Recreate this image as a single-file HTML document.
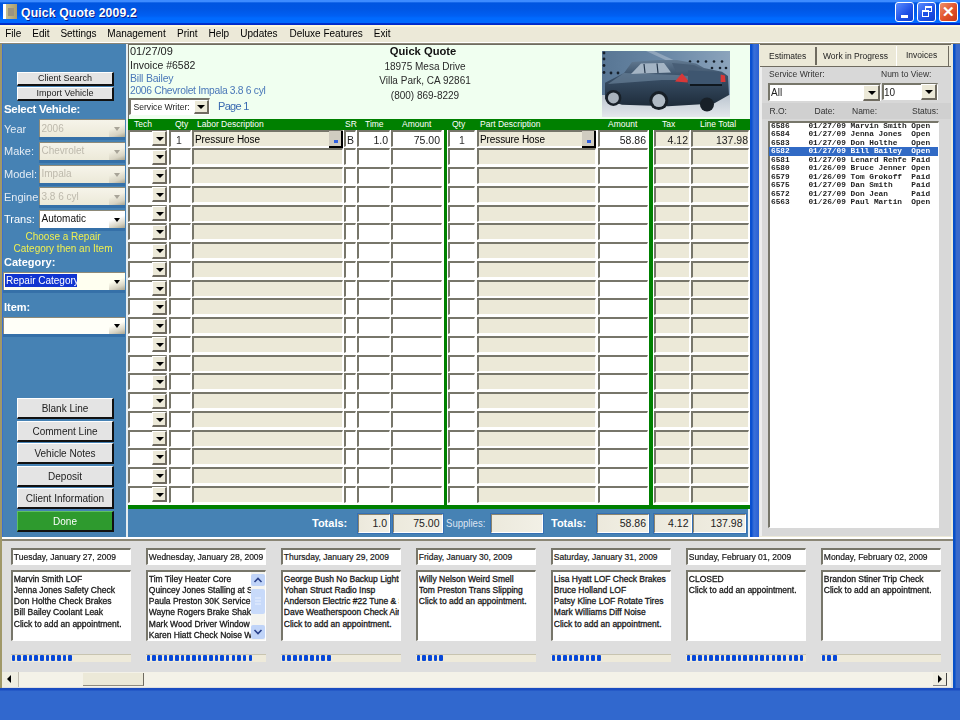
<!DOCTYPE html><html><head><meta charset="utf-8"><style>
*{box-sizing:border-box}
html,body{margin:0;padding:0;width:960px;height:720px;overflow:hidden;background:#ECE9D8;font-family:"Liberation Sans",sans-serif;}
.ab{position:absolute}
.t{position:absolute;white-space:nowrap;line-height:1}
.btn{position:absolute;background:#E4E4E4;border-top:1px solid #fff;border-left:1px solid #fff;border-right:2px solid #111;border-bottom:2px solid #111;font-size:10px;color:#222;text-align:center;line-height:15px;white-space:nowrap}
.sunk{position:absolute;border-top:2px solid #77766A;border-left:2px solid #77766A;border-right:1px solid #fff;border-bottom:1px solid #fff}
.ddb{position:absolute;background:#ECE9D8;border-right:2px solid #6f6b60;border-bottom:2px solid #6f6b60;border-top:1px solid #fff;border-left:1px solid #fff}
.arr{position:absolute;width:0;height:0;border-left:4px solid transparent;border-right:4px solid transparent;border-top:4px solid #000}

</style></head><body><div style="position:absolute;left:0;top:0;width:960px;height:720px;overflow:hidden;filter:blur(0.35px)">
<div class="ab" style="left:0;top:0;width:960px;height:25px;background:linear-gradient(to bottom,#3D8BFF 0px,#3D8BFF 1.5px,#0055E0 3px,#0056E4 9px,#0060F4 16px,#006AFF 18px,#006AFF 22.5px,#0030CC 23.5px,#0028C8 25px)"></div>
<div class="ab" style="left:3px;top:4px;width:14px;height:15px;background:linear-gradient(90deg,#fff 0,#fff 3px,#C8C090 3px,#A89C70 100%)"></div>
<div class="ab" style="left:8px;top:8px;width:6px;height:8px;background:#9C9480"></div>
<div class="t" style="left:21px;top:7px;font-size:12.2px;font-weight:bold;color:#fff;letter-spacing:0.15px;text-shadow:1px 1px 0 #0A1E8C">Quick Quote 2009.2</div>
<div class="ab" style="left:895px;top:2px;width:19px;height:20px;border:1px solid #fff;border-radius:3px;background:linear-gradient(135deg,#5A8CFF,#1E50E6 60%,#1040D0)"><div class="ab" style="left:5px;top:12px;width:7px;height:3px;background:#fff"></div></div>
<div class="ab" style="left:917px;top:2px;width:19px;height:20px;border:1px solid #fff;border-radius:3px;background:linear-gradient(135deg,#5A8CFF,#1E50E6 60%,#1040D0)"><div class="ab" style="left:7px;top:3px;width:7px;height:6px;border:1px solid #fff;border-top-width:2px"></div><div class="ab" style="left:4px;top:7px;width:7px;height:7px;border:1px solid #fff;border-top-width:2px;background:#1E50E6"></div></div>
<div class="ab" style="left:939px;top:2px;width:19px;height:20px;border:1px solid #fff;border-radius:3px;background:linear-gradient(135deg,#F0906A,#E0502A 55%,#C83A18)"><div class="ab" style="left:2px;top:1px;font-size:15px;font-weight:bold;color:#fff;line-height:16px">&#x2715;</div></div>
<div class="ab" style="left:0;top:25px;width:960px;height:2px;background:#FCF8DC"></div>
<div class="t" style="left:5.2px;top:29px;font-size:10px;color:#000">File</div>
<div class="t" style="left:32.3px;top:29px;font-size:10px;color:#000">Edit</div>
<div class="t" style="left:60.4px;top:29px;font-size:10px;color:#000">Settings</div>
<div class="t" style="left:107.3px;top:29px;font-size:10px;color:#000">Management</div>
<div class="t" style="left:177px;top:29px;font-size:10px;color:#000">Print</div>
<div class="t" style="left:208.6px;top:29px;font-size:10px;color:#000">Help</div>
<div class="t" style="left:240.3px;top:29px;font-size:10px;color:#000">Updates</div>
<div class="t" style="left:289.5px;top:29px;font-size:10px;color:#000">Deluxe Features</div>
<div class="t" style="left:373.8px;top:29px;font-size:10px;color:#000">Exit</div>
<div class="ab" style="left:0;top:42px;width:960px;height:1px;background:#fff"></div>
<div class="ab" style="left:0;top:43px;width:960px;height:1px;background:#8A8676"></div>
<div class="ab" style="left:0;top:44px;width:2px;height:644px;background:#A09868"></div>
<div class="ab" style="left:2px;top:44px;width:124px;height:493px;background:#4682B4;border-left:1px solid #3A70D0"></div>
<div class="btn" style="left:17px;top:72px;width:97px;height:14px;font-size:9px;line-height:11px">Client Search</div>
<div class="btn" style="left:17px;top:87px;width:97px;height:14px;font-size:9px;line-height:11px">Import Vehicle</div>
<div class="t" style="left:4px;top:104px;font-size:11.5px;font-weight:bold;color:#fff;letter-spacing:-0.3px">Select Vehicle:</div>
<div class="t" style="left:4px;top:123.8px;font-size:11px;color:#E4ECF4">Year</div>
<div class="ab" style="left:39px;top:137.3px;width:86px;height:3px;background:#3570A8"></div>
<div class="ab" style="left:39px;top:119.3px;width:86px;height:18px;background:linear-gradient(#F6F4EA,#ECE9D8);border-top:1.5px solid #8E8A78;border-left:1.5px solid #8E8A78"></div>
<div class="t" style="left:41.5px;top:123.8px;font-size:10px;color:#BDB9AC">2006</div>
<div class="ab" style="left:109px;top:121.3px;width:16px;height:16px;background:linear-gradient(160deg,rgba(236,233,216,0) 40%,#D8D4C4 75%,#A8A490 100%)"></div>
<div class="arr" style="left:113.5px;top:127.3px;border-left-width:3.5px;border-right-width:3.5px;border-top-width:4px;border-top-color:#A8A498"></div>
<div class="t" style="left:4px;top:146.4px;font-size:11px;color:#E4ECF4">Make:</div>
<div class="ab" style="left:39px;top:159.9px;width:86px;height:3px;background:#3570A8"></div>
<div class="ab" style="left:39px;top:141.9px;width:86px;height:18px;background:linear-gradient(#F6F4EA,#ECE9D8);border-top:1.5px solid #8E8A78;border-left:1.5px solid #8E8A78"></div>
<div class="t" style="left:41.5px;top:146.4px;font-size:10px;color:#BDB9AC">Chevrolet</div>
<div class="ab" style="left:109px;top:143.9px;width:16px;height:16px;background:linear-gradient(160deg,rgba(236,233,216,0) 40%,#D8D4C4 75%,#A8A490 100%)"></div>
<div class="arr" style="left:113.5px;top:149.9px;border-left-width:3.5px;border-right-width:3.5px;border-top-width:4px;border-top-color:#A8A498"></div>
<div class="t" style="left:4px;top:169.0px;font-size:11px;color:#E4ECF4">Model:</div>
<div class="ab" style="left:39px;top:182.5px;width:86px;height:3px;background:#3570A8"></div>
<div class="ab" style="left:39px;top:164.5px;width:86px;height:18px;background:linear-gradient(#F6F4EA,#ECE9D8);border-top:1.5px solid #8E8A78;border-left:1.5px solid #8E8A78"></div>
<div class="t" style="left:41.5px;top:169.0px;font-size:10px;color:#BDB9AC">Impala</div>
<div class="ab" style="left:109px;top:166.5px;width:16px;height:16px;background:linear-gradient(160deg,rgba(236,233,216,0) 40%,#D8D4C4 75%,#A8A490 100%)"></div>
<div class="arr" style="left:113.5px;top:172.5px;border-left-width:3.5px;border-right-width:3.5px;border-top-width:4px;border-top-color:#A8A498"></div>
<div class="t" style="left:4px;top:191.6px;font-size:11px;color:#E4ECF4">Engine</div>
<div class="ab" style="left:39px;top:205.1px;width:86px;height:3px;background:#3570A8"></div>
<div class="ab" style="left:39px;top:187.1px;width:86px;height:18px;background:linear-gradient(#F6F4EA,#ECE9D8);border-top:1.5px solid #8E8A78;border-left:1.5px solid #8E8A78"></div>
<div class="t" style="left:41.5px;top:191.6px;font-size:10px;color:#BDB9AC">3.8 6 cyl</div>
<div class="ab" style="left:109px;top:189.1px;width:16px;height:16px;background:linear-gradient(160deg,rgba(236,233,216,0) 40%,#D8D4C4 75%,#A8A490 100%)"></div>
<div class="arr" style="left:113.5px;top:195.1px;border-left-width:3.5px;border-right-width:3.5px;border-top-width:4px;border-top-color:#A8A498"></div>
<div class="t" style="left:4px;top:214.2px;font-size:11px;color:#fff">Trans:</div>
<div class="ab" style="left:39px;top:227.7px;width:86px;height:3px;background:#3570A8"></div>
<div class="ab" style="left:39px;top:209.7px;width:86px;height:18px;background:#fff;border-top:1.5px solid #8E8A78;border-left:1.5px solid #8E8A78"></div>
<div class="t" style="left:41.5px;top:214.2px;font-size:10px;color:#111">Automatic</div>
<div class="ab" style="left:109px;top:211.7px;width:16px;height:16px;background:linear-gradient(160deg,rgba(236,233,216,0) 40%,#D8D4C4 75%,#A8A490 100%)"></div>
<div class="arr" style="left:113.5px;top:217.7px;border-left-width:3.5px;border-right-width:3.5px;border-top-width:4px;border-top-color:#000"></div>
<div class="t" style="left:0;top:231px;width:126px;text-align:center;font-size:10px;color:#F0F050;line-height:12px;white-space:normal">Choose a Repair<br>Category then an Item</div>
<div class="t" style="left:4px;top:257px;font-size:11px;font-weight:bold;color:#fff">Category:</div>
<div class="ab" style="left:3px;top:290px;width:122px;height:3px;background:#3570A8"></div>
<div class="ab" style="left:3px;top:272px;width:122px;height:18px;background:#FFFFF0;border-top:1.5px solid #8E8A78;border-left:1.5px solid #8E8A78"></div>
<div class="ab" style="left:5px;top:274px;width:72px;height:13px;background:#1034D0"></div>
<div class="t" style="left:6px;top:276px;font-size:10px;color:#fff">Repair Category</div>
<div class="ab" style="left:109px;top:274px;width:16px;height:16px;background:linear-gradient(160deg,rgba(236,233,216,0) 40%,#D8D4C4 75%,#A8A490 100%)"></div><div class="arr" style="left:113.5px;top:280px;border-left-width:3.5px;border-right-width:3.5px"></div>
<div class="t" style="left:4px;top:302px;font-size:11px;font-weight:bold;color:#fff">Item:</div>
<div class="ab" style="left:3px;top:334px;width:122px;height:3px;background:#3570A8"></div>
<div class="ab" style="left:3px;top:316.5px;width:122px;height:17.5px;background:#FFFFF8;border-top:1.5px solid #8E8A78;border-left:1.5px solid #8E8A78"></div>
<div class="ab" style="left:109px;top:318px;width:16px;height:16px;background:linear-gradient(160deg,rgba(236,233,216,0) 40%,#D8D4C4 75%,#A8A490 100%)"></div><div class="arr" style="left:113.5px;top:324px;border-left-width:3.5px;border-right-width:3.5px"></div>
<div class="btn" style="left:17px;top:398.0px;width:97px;height:21px;line-height:20px">Blank Line</div>
<div class="btn" style="left:17px;top:420.5px;width:97px;height:21px;line-height:20px">Comment Line</div>
<div class="btn" style="left:17px;top:443.0px;width:97px;height:21px;line-height:20px">Vehicle Notes</div>
<div class="btn" style="left:17px;top:465.5px;width:97px;height:21px;line-height:20px">Deposit</div>
<div class="btn" style="left:17px;top:488.0px;width:97px;height:21px;line-height:20px">Client Information</div>
<div class="btn" style="left:17px;top:510.5px;width:97px;height:21px;line-height:19px;background:#2E9A2E;color:#fff;border-top-color:#60C060;border-left-color:#60C060">Done</div>
<div class="ab" style="left:126px;top:44px;width:2px;height:493px;background:#E4ECF0"></div>
<div class="ab" style="left:128px;top:44px;width:622px;height:75px;background:#F0FFF0;border-top:1px solid #6f6b60;border-left:1px solid #6f6b60"></div>
<div class="t" style="left:130px;top:46px;font-size:11px;letter-spacing:0px;color:#222">01/27/09</div>
<div class="t" style="left:130px;top:59.5px;font-size:10.5px;letter-spacing:0px;color:#222">Invoice #6582</div>
<div class="t" style="left:130px;top:72.5px;font-size:10.5px;letter-spacing:-0.2px;color:#4A78B8">Bill Bailey</div>
<div class="t" style="left:130px;top:86px;font-size:10.3px;letter-spacing:-0.3px;color:#4A78B8">2006 Chevrolet Impala 3.8 6 cyl</div>
<div class="sunk" style="left:129px;top:98px;width:81px;height:17px;background:#fff"></div>
<div class="t" style="left:133.5px;top:103px;font-size:8.6px;color:#222">Service Writer:</div>
<div class="ddb" style="left:194px;top:100px;width:15px;height:14px"></div><div class="arr" style="left:197px;top:105px"></div>
<div class="t" style="left:218px;top:101px;font-size:11px;letter-spacing:-0.7px;color:#3A6AB0">Page 1</div>
<div class="t" style="left:323px;width:200px;text-align:center;top:46px;font-size:11.2px;color:#111;font-weight:bold">Quick Quote</div>
<div class="t" style="left:325px;width:200px;text-align:center;top:62.2px;font-size:10px;color:#2a2a2a;">18975 Mesa Drive</div>
<div class="t" style="left:325px;width:200px;text-align:center;top:76.2px;font-size:10px;color:#2a2a2a;">Villa Park, CA 92861</div>
<div class="t" style="left:325px;width:200px;text-align:center;top:91.2px;font-size:10px;color:#2a2a2a;">(800) 869-8229</div>
<svg class="ab" style="left:602.4px;top:50.6px" width="128" height="66" viewBox="0 0 128 66">
<defs>
<linearGradient id="bg" x1="0" y1="0" x2="1" y2="0"><stop offset="0" stop-color="#587694"/><stop offset="0.5" stop-color="#6A88A6"/><stop offset="1" stop-color="#8CA4BC"/></linearGradient>
<linearGradient id="gr" x1="0" y1="0" x2="0" y2="1"><stop offset="0" stop-color="#BCC6D0"/><stop offset="1" stop-color="#E4E8EC"/></linearGradient>
<linearGradient id="bd" x1="0" y1="0" x2="0" y2="1"><stop offset="0" stop-color="#627A92"/><stop offset="0.35" stop-color="#3A5068"/><stop offset="1" stop-color="#1E2C3A"/></linearGradient>
</defs>
<rect width="128" height="66" fill="url(#bg)"/>
<path d="M44 0 L52 0 L78 12 L70 12 Z" fill="#B0C0D0" opacity="0.55"/>
<rect x="0" y="44" width="128" height="22" fill="url(#gr)"/>
<g fill="#16202C"><circle cx="2" cy="2" r="1.4"/><circle cx="2" cy="8" r="1.4"/><circle cx="2" cy="14.5" r="1.4"/><circle cx="2" cy="21.5" r="1.4"/><circle cx="9" cy="22" r="1.4"/><circle cx="16" cy="22" r="1.4"/><circle cx="88" cy="10.5" r="1.3"/><circle cx="96" cy="10.5" r="1.3"/><circle cx="104" cy="10.5" r="1.3"/><circle cx="112" cy="10.5" r="1.3"/><circle cx="120" cy="10.5" r="1.3"/><circle cx="110" cy="17" r="1.3"/><circle cx="118" cy="17" r="1.3"/><circle cx="124" cy="17" r="1.3"/></g>
<path d="M30 11 L56 9 L75 9 L94 12.5 L102 17 L120 20.8 L126 25 L127 44 L112 52.4 L66 55.2 L20 53.8 L3 48.3 L3 31.8 L22 22 Z" fill="url(#bd)"/>
<path d="M22 22 L75 24 L100 26 L100 29 L60 29 L6 33 Z" fill="#7088A0" opacity="0.6"/>
<path d="M29 23 L39 12.5 L62 12 L69 21.5 Z" fill="#A4B4C4"/>
<path d="M42 13 L43 22 M55 12.5 L56 22" stroke="#24364A" stroke-width="1.2"/>
<path d="M70 12 L92 14 L100 18 L74 21 Z" fill="#485E76"/>
<path d="M86 19.4 L120 21 L120 33 L86 33 Z" fill="#3E5670"/>
<path d="M73 30.4 L80 22.2 L85.7 29 L85.7 31.5 Z" fill="#D83838"/>
<path d="M118.7 23.5 L123 24.5 L123.5 31 L118.7 31 Z" fill="#D83838"/>
<rect x="88" y="33" width="32" height="2" fill="#10181F"/>
<circle cx="11.4" cy="46.9" r="8" fill="#182028"/><circle cx="11.4" cy="46.9" r="5.5" fill="#A8B2BC"/>
<circle cx="56.8" cy="49.6" r="9.5" fill="#182028"/><circle cx="56.8" cy="49.6" r="6.5" fill="#B0BAC4"/>
<circle cx="105" cy="53.5" r="7" fill="#182028"/>
</svg>
<div class="ab" style="left:128px;top:119px;width:622px;height:390px;background:#fff"></div>
<div class="ab" style="left:128px;top:118.5px;width:622px;height:11.5px;background:#008000"></div>
<div class="t" style="left:134px;top:120px;font-size:8.5px;color:#fff">Tech</div>
<div class="t" style="left:175px;top:120px;font-size:8.5px;color:#fff">Qty</div>
<div class="t" style="left:197px;top:120px;font-size:8.5px;color:#fff">Labor Description</div>
<div class="t" style="left:345px;top:120px;font-size:8.5px;color:#fff">SR</div>
<div class="t" style="left:365px;top:120px;font-size:8.5px;color:#fff">Time</div>
<div class="t" style="left:402px;top:120px;font-size:8.5px;color:#fff">Amount</div>
<div class="t" style="left:452px;top:120px;font-size:8.5px;color:#fff">Qty</div>
<div class="t" style="left:480px;top:120px;font-size:8.5px;color:#fff">Part Description</div>
<div class="t" style="left:608px;top:120px;font-size:8.5px;color:#fff">Amount</div>
<div class="t" style="left:662px;top:120px;font-size:8.5px;color:#fff">Tax</div>
<div class="t" style="left:700px;top:120px;font-size:8.5px;color:#fff">Line Total</div>
<div class="ab" style="left:443.5px;top:119px;width:3.5px;height:390px;background:#008000"></div>
<div class="ab" style="left:649px;top:119px;width:3.5px;height:390px;background:#008000"></div>
<div class="ab" style="left:128px;top:505px;width:622px;height:3.5px;background:#008000"></div>
<div class="sunk" style="left:128px;top:129.60px;width:39px;height:17px;background:#fff"></div>
<div class="ddb" style="left:152px;top:131.10px;width:15px;height:15px"></div><div class="arr" style="left:155.5px;top:136.60px"></div>
<div class="sunk" style="left:169px;top:129.60px;width:22px;height:17px;background:#fff"></div>
<div class="sunk" style="left:192px;top:129.60px;width:151px;height:17px;background:#ECE9D8"></div>
<div class="sunk" style="left:344px;top:129.60px;width:12px;height:17px;background:#fff"></div>
<div class="sunk" style="left:357px;top:129.60px;width:33px;height:17px;background:#fff"></div>
<div class="sunk" style="left:391px;top:129.60px;width:51px;height:17px;background:#fff"></div>
<div class="sunk" style="left:447.5px;top:129.60px;width:27.5px;height:17px;background:#fff"></div>
<div class="sunk" style="left:476.5px;top:129.60px;width:119.5px;height:17px;background:#ECE9D8"></div>
<div class="sunk" style="left:597.5px;top:129.60px;width:50.5px;height:17px;background:#fff"></div>
<div class="sunk" style="left:653.5px;top:129.60px;width:36.5px;height:17px;background:#ECE9D8"></div>
<div class="sunk" style="left:691px;top:129.60px;width:58px;height:17px;background:#ECE9D8"></div>
<div class="sunk" style="left:128px;top:148.35px;width:39px;height:17px;background:#fff"></div>
<div class="ddb" style="left:152px;top:149.85px;width:15px;height:15px"></div><div class="arr" style="left:155.5px;top:155.35px"></div>
<div class="sunk" style="left:169px;top:148.35px;width:22px;height:17px;background:#fff"></div>
<div class="sunk" style="left:192px;top:148.35px;width:151px;height:17px;background:#ECE9D8"></div>
<div class="sunk" style="left:344px;top:148.35px;width:12px;height:17px;background:#fff"></div>
<div class="sunk" style="left:357px;top:148.35px;width:33px;height:17px;background:#fff"></div>
<div class="sunk" style="left:391px;top:148.35px;width:51px;height:17px;background:#fff"></div>
<div class="sunk" style="left:447.5px;top:148.35px;width:27.5px;height:17px;background:#fff"></div>
<div class="sunk" style="left:476.5px;top:148.35px;width:119.5px;height:17px;background:#ECE9D8"></div>
<div class="sunk" style="left:597.5px;top:148.35px;width:50.5px;height:17px;background:#fff"></div>
<div class="sunk" style="left:653.5px;top:148.35px;width:36.5px;height:17px;background:#ECE9D8"></div>
<div class="sunk" style="left:691px;top:148.35px;width:58px;height:17px;background:#ECE9D8"></div>
<div class="sunk" style="left:128px;top:167.10px;width:39px;height:17px;background:#fff"></div>
<div class="ddb" style="left:152px;top:168.60px;width:15px;height:15px"></div><div class="arr" style="left:155.5px;top:174.10px"></div>
<div class="sunk" style="left:169px;top:167.10px;width:22px;height:17px;background:#fff"></div>
<div class="sunk" style="left:192px;top:167.10px;width:151px;height:17px;background:#ECE9D8"></div>
<div class="sunk" style="left:344px;top:167.10px;width:12px;height:17px;background:#fff"></div>
<div class="sunk" style="left:357px;top:167.10px;width:33px;height:17px;background:#fff"></div>
<div class="sunk" style="left:391px;top:167.10px;width:51px;height:17px;background:#fff"></div>
<div class="sunk" style="left:447.5px;top:167.10px;width:27.5px;height:17px;background:#fff"></div>
<div class="sunk" style="left:476.5px;top:167.10px;width:119.5px;height:17px;background:#ECE9D8"></div>
<div class="sunk" style="left:597.5px;top:167.10px;width:50.5px;height:17px;background:#fff"></div>
<div class="sunk" style="left:653.5px;top:167.10px;width:36.5px;height:17px;background:#ECE9D8"></div>
<div class="sunk" style="left:691px;top:167.10px;width:58px;height:17px;background:#ECE9D8"></div>
<div class="sunk" style="left:128px;top:185.85px;width:39px;height:17px;background:#fff"></div>
<div class="ddb" style="left:152px;top:187.35px;width:15px;height:15px"></div><div class="arr" style="left:155.5px;top:192.85px"></div>
<div class="sunk" style="left:169px;top:185.85px;width:22px;height:17px;background:#fff"></div>
<div class="sunk" style="left:192px;top:185.85px;width:151px;height:17px;background:#ECE9D8"></div>
<div class="sunk" style="left:344px;top:185.85px;width:12px;height:17px;background:#fff"></div>
<div class="sunk" style="left:357px;top:185.85px;width:33px;height:17px;background:#fff"></div>
<div class="sunk" style="left:391px;top:185.85px;width:51px;height:17px;background:#fff"></div>
<div class="sunk" style="left:447.5px;top:185.85px;width:27.5px;height:17px;background:#fff"></div>
<div class="sunk" style="left:476.5px;top:185.85px;width:119.5px;height:17px;background:#ECE9D8"></div>
<div class="sunk" style="left:597.5px;top:185.85px;width:50.5px;height:17px;background:#fff"></div>
<div class="sunk" style="left:653.5px;top:185.85px;width:36.5px;height:17px;background:#ECE9D8"></div>
<div class="sunk" style="left:691px;top:185.85px;width:58px;height:17px;background:#ECE9D8"></div>
<div class="sunk" style="left:128px;top:204.60px;width:39px;height:17px;background:#fff"></div>
<div class="ddb" style="left:152px;top:206.10px;width:15px;height:15px"></div><div class="arr" style="left:155.5px;top:211.60px"></div>
<div class="sunk" style="left:169px;top:204.60px;width:22px;height:17px;background:#fff"></div>
<div class="sunk" style="left:192px;top:204.60px;width:151px;height:17px;background:#ECE9D8"></div>
<div class="sunk" style="left:344px;top:204.60px;width:12px;height:17px;background:#fff"></div>
<div class="sunk" style="left:357px;top:204.60px;width:33px;height:17px;background:#fff"></div>
<div class="sunk" style="left:391px;top:204.60px;width:51px;height:17px;background:#fff"></div>
<div class="sunk" style="left:447.5px;top:204.60px;width:27.5px;height:17px;background:#fff"></div>
<div class="sunk" style="left:476.5px;top:204.60px;width:119.5px;height:17px;background:#ECE9D8"></div>
<div class="sunk" style="left:597.5px;top:204.60px;width:50.5px;height:17px;background:#fff"></div>
<div class="sunk" style="left:653.5px;top:204.60px;width:36.5px;height:17px;background:#ECE9D8"></div>
<div class="sunk" style="left:691px;top:204.60px;width:58px;height:17px;background:#ECE9D8"></div>
<div class="sunk" style="left:128px;top:223.35px;width:39px;height:17px;background:#fff"></div>
<div class="ddb" style="left:152px;top:224.85px;width:15px;height:15px"></div><div class="arr" style="left:155.5px;top:230.35px"></div>
<div class="sunk" style="left:169px;top:223.35px;width:22px;height:17px;background:#fff"></div>
<div class="sunk" style="left:192px;top:223.35px;width:151px;height:17px;background:#ECE9D8"></div>
<div class="sunk" style="left:344px;top:223.35px;width:12px;height:17px;background:#fff"></div>
<div class="sunk" style="left:357px;top:223.35px;width:33px;height:17px;background:#fff"></div>
<div class="sunk" style="left:391px;top:223.35px;width:51px;height:17px;background:#fff"></div>
<div class="sunk" style="left:447.5px;top:223.35px;width:27.5px;height:17px;background:#fff"></div>
<div class="sunk" style="left:476.5px;top:223.35px;width:119.5px;height:17px;background:#ECE9D8"></div>
<div class="sunk" style="left:597.5px;top:223.35px;width:50.5px;height:17px;background:#fff"></div>
<div class="sunk" style="left:653.5px;top:223.35px;width:36.5px;height:17px;background:#ECE9D8"></div>
<div class="sunk" style="left:691px;top:223.35px;width:58px;height:17px;background:#ECE9D8"></div>
<div class="sunk" style="left:128px;top:242.10px;width:39px;height:17px;background:#fff"></div>
<div class="ddb" style="left:152px;top:243.60px;width:15px;height:15px"></div><div class="arr" style="left:155.5px;top:249.10px"></div>
<div class="sunk" style="left:169px;top:242.10px;width:22px;height:17px;background:#fff"></div>
<div class="sunk" style="left:192px;top:242.10px;width:151px;height:17px;background:#ECE9D8"></div>
<div class="sunk" style="left:344px;top:242.10px;width:12px;height:17px;background:#fff"></div>
<div class="sunk" style="left:357px;top:242.10px;width:33px;height:17px;background:#fff"></div>
<div class="sunk" style="left:391px;top:242.10px;width:51px;height:17px;background:#fff"></div>
<div class="sunk" style="left:447.5px;top:242.10px;width:27.5px;height:17px;background:#fff"></div>
<div class="sunk" style="left:476.5px;top:242.10px;width:119.5px;height:17px;background:#ECE9D8"></div>
<div class="sunk" style="left:597.5px;top:242.10px;width:50.5px;height:17px;background:#fff"></div>
<div class="sunk" style="left:653.5px;top:242.10px;width:36.5px;height:17px;background:#ECE9D8"></div>
<div class="sunk" style="left:691px;top:242.10px;width:58px;height:17px;background:#ECE9D8"></div>
<div class="sunk" style="left:128px;top:260.85px;width:39px;height:17px;background:#fff"></div>
<div class="ddb" style="left:152px;top:262.35px;width:15px;height:15px"></div><div class="arr" style="left:155.5px;top:267.85px"></div>
<div class="sunk" style="left:169px;top:260.85px;width:22px;height:17px;background:#fff"></div>
<div class="sunk" style="left:192px;top:260.85px;width:151px;height:17px;background:#ECE9D8"></div>
<div class="sunk" style="left:344px;top:260.85px;width:12px;height:17px;background:#fff"></div>
<div class="sunk" style="left:357px;top:260.85px;width:33px;height:17px;background:#fff"></div>
<div class="sunk" style="left:391px;top:260.85px;width:51px;height:17px;background:#fff"></div>
<div class="sunk" style="left:447.5px;top:260.85px;width:27.5px;height:17px;background:#fff"></div>
<div class="sunk" style="left:476.5px;top:260.85px;width:119.5px;height:17px;background:#ECE9D8"></div>
<div class="sunk" style="left:597.5px;top:260.85px;width:50.5px;height:17px;background:#fff"></div>
<div class="sunk" style="left:653.5px;top:260.85px;width:36.5px;height:17px;background:#ECE9D8"></div>
<div class="sunk" style="left:691px;top:260.85px;width:58px;height:17px;background:#ECE9D8"></div>
<div class="sunk" style="left:128px;top:279.60px;width:39px;height:17px;background:#fff"></div>
<div class="ddb" style="left:152px;top:281.10px;width:15px;height:15px"></div><div class="arr" style="left:155.5px;top:286.60px"></div>
<div class="sunk" style="left:169px;top:279.60px;width:22px;height:17px;background:#fff"></div>
<div class="sunk" style="left:192px;top:279.60px;width:151px;height:17px;background:#ECE9D8"></div>
<div class="sunk" style="left:344px;top:279.60px;width:12px;height:17px;background:#fff"></div>
<div class="sunk" style="left:357px;top:279.60px;width:33px;height:17px;background:#fff"></div>
<div class="sunk" style="left:391px;top:279.60px;width:51px;height:17px;background:#fff"></div>
<div class="sunk" style="left:447.5px;top:279.60px;width:27.5px;height:17px;background:#fff"></div>
<div class="sunk" style="left:476.5px;top:279.60px;width:119.5px;height:17px;background:#ECE9D8"></div>
<div class="sunk" style="left:597.5px;top:279.60px;width:50.5px;height:17px;background:#fff"></div>
<div class="sunk" style="left:653.5px;top:279.60px;width:36.5px;height:17px;background:#ECE9D8"></div>
<div class="sunk" style="left:691px;top:279.60px;width:58px;height:17px;background:#ECE9D8"></div>
<div class="sunk" style="left:128px;top:298.35px;width:39px;height:17px;background:#fff"></div>
<div class="ddb" style="left:152px;top:299.85px;width:15px;height:15px"></div><div class="arr" style="left:155.5px;top:305.35px"></div>
<div class="sunk" style="left:169px;top:298.35px;width:22px;height:17px;background:#fff"></div>
<div class="sunk" style="left:192px;top:298.35px;width:151px;height:17px;background:#ECE9D8"></div>
<div class="sunk" style="left:344px;top:298.35px;width:12px;height:17px;background:#fff"></div>
<div class="sunk" style="left:357px;top:298.35px;width:33px;height:17px;background:#fff"></div>
<div class="sunk" style="left:391px;top:298.35px;width:51px;height:17px;background:#fff"></div>
<div class="sunk" style="left:447.5px;top:298.35px;width:27.5px;height:17px;background:#fff"></div>
<div class="sunk" style="left:476.5px;top:298.35px;width:119.5px;height:17px;background:#ECE9D8"></div>
<div class="sunk" style="left:597.5px;top:298.35px;width:50.5px;height:17px;background:#fff"></div>
<div class="sunk" style="left:653.5px;top:298.35px;width:36.5px;height:17px;background:#ECE9D8"></div>
<div class="sunk" style="left:691px;top:298.35px;width:58px;height:17px;background:#ECE9D8"></div>
<div class="sunk" style="left:128px;top:317.10px;width:39px;height:17px;background:#fff"></div>
<div class="ddb" style="left:152px;top:318.60px;width:15px;height:15px"></div><div class="arr" style="left:155.5px;top:324.10px"></div>
<div class="sunk" style="left:169px;top:317.10px;width:22px;height:17px;background:#fff"></div>
<div class="sunk" style="left:192px;top:317.10px;width:151px;height:17px;background:#ECE9D8"></div>
<div class="sunk" style="left:344px;top:317.10px;width:12px;height:17px;background:#fff"></div>
<div class="sunk" style="left:357px;top:317.10px;width:33px;height:17px;background:#fff"></div>
<div class="sunk" style="left:391px;top:317.10px;width:51px;height:17px;background:#fff"></div>
<div class="sunk" style="left:447.5px;top:317.10px;width:27.5px;height:17px;background:#fff"></div>
<div class="sunk" style="left:476.5px;top:317.10px;width:119.5px;height:17px;background:#ECE9D8"></div>
<div class="sunk" style="left:597.5px;top:317.10px;width:50.5px;height:17px;background:#fff"></div>
<div class="sunk" style="left:653.5px;top:317.10px;width:36.5px;height:17px;background:#ECE9D8"></div>
<div class="sunk" style="left:691px;top:317.10px;width:58px;height:17px;background:#ECE9D8"></div>
<div class="sunk" style="left:128px;top:335.85px;width:39px;height:17px;background:#fff"></div>
<div class="ddb" style="left:152px;top:337.35px;width:15px;height:15px"></div><div class="arr" style="left:155.5px;top:342.85px"></div>
<div class="sunk" style="left:169px;top:335.85px;width:22px;height:17px;background:#fff"></div>
<div class="sunk" style="left:192px;top:335.85px;width:151px;height:17px;background:#ECE9D8"></div>
<div class="sunk" style="left:344px;top:335.85px;width:12px;height:17px;background:#fff"></div>
<div class="sunk" style="left:357px;top:335.85px;width:33px;height:17px;background:#fff"></div>
<div class="sunk" style="left:391px;top:335.85px;width:51px;height:17px;background:#fff"></div>
<div class="sunk" style="left:447.5px;top:335.85px;width:27.5px;height:17px;background:#fff"></div>
<div class="sunk" style="left:476.5px;top:335.85px;width:119.5px;height:17px;background:#ECE9D8"></div>
<div class="sunk" style="left:597.5px;top:335.85px;width:50.5px;height:17px;background:#fff"></div>
<div class="sunk" style="left:653.5px;top:335.85px;width:36.5px;height:17px;background:#ECE9D8"></div>
<div class="sunk" style="left:691px;top:335.85px;width:58px;height:17px;background:#ECE9D8"></div>
<div class="sunk" style="left:128px;top:354.60px;width:39px;height:17px;background:#fff"></div>
<div class="ddb" style="left:152px;top:356.10px;width:15px;height:15px"></div><div class="arr" style="left:155.5px;top:361.60px"></div>
<div class="sunk" style="left:169px;top:354.60px;width:22px;height:17px;background:#fff"></div>
<div class="sunk" style="left:192px;top:354.60px;width:151px;height:17px;background:#ECE9D8"></div>
<div class="sunk" style="left:344px;top:354.60px;width:12px;height:17px;background:#fff"></div>
<div class="sunk" style="left:357px;top:354.60px;width:33px;height:17px;background:#fff"></div>
<div class="sunk" style="left:391px;top:354.60px;width:51px;height:17px;background:#fff"></div>
<div class="sunk" style="left:447.5px;top:354.60px;width:27.5px;height:17px;background:#fff"></div>
<div class="sunk" style="left:476.5px;top:354.60px;width:119.5px;height:17px;background:#ECE9D8"></div>
<div class="sunk" style="left:597.5px;top:354.60px;width:50.5px;height:17px;background:#fff"></div>
<div class="sunk" style="left:653.5px;top:354.60px;width:36.5px;height:17px;background:#ECE9D8"></div>
<div class="sunk" style="left:691px;top:354.60px;width:58px;height:17px;background:#ECE9D8"></div>
<div class="sunk" style="left:128px;top:373.35px;width:39px;height:17px;background:#fff"></div>
<div class="ddb" style="left:152px;top:374.85px;width:15px;height:15px"></div><div class="arr" style="left:155.5px;top:380.35px"></div>
<div class="sunk" style="left:169px;top:373.35px;width:22px;height:17px;background:#fff"></div>
<div class="sunk" style="left:192px;top:373.35px;width:151px;height:17px;background:#ECE9D8"></div>
<div class="sunk" style="left:344px;top:373.35px;width:12px;height:17px;background:#fff"></div>
<div class="sunk" style="left:357px;top:373.35px;width:33px;height:17px;background:#fff"></div>
<div class="sunk" style="left:391px;top:373.35px;width:51px;height:17px;background:#fff"></div>
<div class="sunk" style="left:447.5px;top:373.35px;width:27.5px;height:17px;background:#fff"></div>
<div class="sunk" style="left:476.5px;top:373.35px;width:119.5px;height:17px;background:#ECE9D8"></div>
<div class="sunk" style="left:597.5px;top:373.35px;width:50.5px;height:17px;background:#fff"></div>
<div class="sunk" style="left:653.5px;top:373.35px;width:36.5px;height:17px;background:#ECE9D8"></div>
<div class="sunk" style="left:691px;top:373.35px;width:58px;height:17px;background:#ECE9D8"></div>
<div class="sunk" style="left:128px;top:392.10px;width:39px;height:17px;background:#fff"></div>
<div class="ddb" style="left:152px;top:393.60px;width:15px;height:15px"></div><div class="arr" style="left:155.5px;top:399.10px"></div>
<div class="sunk" style="left:169px;top:392.10px;width:22px;height:17px;background:#fff"></div>
<div class="sunk" style="left:192px;top:392.10px;width:151px;height:17px;background:#ECE9D8"></div>
<div class="sunk" style="left:344px;top:392.10px;width:12px;height:17px;background:#fff"></div>
<div class="sunk" style="left:357px;top:392.10px;width:33px;height:17px;background:#fff"></div>
<div class="sunk" style="left:391px;top:392.10px;width:51px;height:17px;background:#fff"></div>
<div class="sunk" style="left:447.5px;top:392.10px;width:27.5px;height:17px;background:#fff"></div>
<div class="sunk" style="left:476.5px;top:392.10px;width:119.5px;height:17px;background:#ECE9D8"></div>
<div class="sunk" style="left:597.5px;top:392.10px;width:50.5px;height:17px;background:#fff"></div>
<div class="sunk" style="left:653.5px;top:392.10px;width:36.5px;height:17px;background:#ECE9D8"></div>
<div class="sunk" style="left:691px;top:392.10px;width:58px;height:17px;background:#ECE9D8"></div>
<div class="sunk" style="left:128px;top:410.85px;width:39px;height:17px;background:#fff"></div>
<div class="ddb" style="left:152px;top:412.35px;width:15px;height:15px"></div><div class="arr" style="left:155.5px;top:417.85px"></div>
<div class="sunk" style="left:169px;top:410.85px;width:22px;height:17px;background:#fff"></div>
<div class="sunk" style="left:192px;top:410.85px;width:151px;height:17px;background:#ECE9D8"></div>
<div class="sunk" style="left:344px;top:410.85px;width:12px;height:17px;background:#fff"></div>
<div class="sunk" style="left:357px;top:410.85px;width:33px;height:17px;background:#fff"></div>
<div class="sunk" style="left:391px;top:410.85px;width:51px;height:17px;background:#fff"></div>
<div class="sunk" style="left:447.5px;top:410.85px;width:27.5px;height:17px;background:#fff"></div>
<div class="sunk" style="left:476.5px;top:410.85px;width:119.5px;height:17px;background:#ECE9D8"></div>
<div class="sunk" style="left:597.5px;top:410.85px;width:50.5px;height:17px;background:#fff"></div>
<div class="sunk" style="left:653.5px;top:410.85px;width:36.5px;height:17px;background:#ECE9D8"></div>
<div class="sunk" style="left:691px;top:410.85px;width:58px;height:17px;background:#ECE9D8"></div>
<div class="sunk" style="left:128px;top:429.60px;width:39px;height:17px;background:#fff"></div>
<div class="ddb" style="left:152px;top:431.10px;width:15px;height:15px"></div><div class="arr" style="left:155.5px;top:436.60px"></div>
<div class="sunk" style="left:169px;top:429.60px;width:22px;height:17px;background:#fff"></div>
<div class="sunk" style="left:192px;top:429.60px;width:151px;height:17px;background:#ECE9D8"></div>
<div class="sunk" style="left:344px;top:429.60px;width:12px;height:17px;background:#fff"></div>
<div class="sunk" style="left:357px;top:429.60px;width:33px;height:17px;background:#fff"></div>
<div class="sunk" style="left:391px;top:429.60px;width:51px;height:17px;background:#fff"></div>
<div class="sunk" style="left:447.5px;top:429.60px;width:27.5px;height:17px;background:#fff"></div>
<div class="sunk" style="left:476.5px;top:429.60px;width:119.5px;height:17px;background:#ECE9D8"></div>
<div class="sunk" style="left:597.5px;top:429.60px;width:50.5px;height:17px;background:#fff"></div>
<div class="sunk" style="left:653.5px;top:429.60px;width:36.5px;height:17px;background:#ECE9D8"></div>
<div class="sunk" style="left:691px;top:429.60px;width:58px;height:17px;background:#ECE9D8"></div>
<div class="sunk" style="left:128px;top:448.35px;width:39px;height:17px;background:#fff"></div>
<div class="ddb" style="left:152px;top:449.85px;width:15px;height:15px"></div><div class="arr" style="left:155.5px;top:455.35px"></div>
<div class="sunk" style="left:169px;top:448.35px;width:22px;height:17px;background:#fff"></div>
<div class="sunk" style="left:192px;top:448.35px;width:151px;height:17px;background:#ECE9D8"></div>
<div class="sunk" style="left:344px;top:448.35px;width:12px;height:17px;background:#fff"></div>
<div class="sunk" style="left:357px;top:448.35px;width:33px;height:17px;background:#fff"></div>
<div class="sunk" style="left:391px;top:448.35px;width:51px;height:17px;background:#fff"></div>
<div class="sunk" style="left:447.5px;top:448.35px;width:27.5px;height:17px;background:#fff"></div>
<div class="sunk" style="left:476.5px;top:448.35px;width:119.5px;height:17px;background:#ECE9D8"></div>
<div class="sunk" style="left:597.5px;top:448.35px;width:50.5px;height:17px;background:#fff"></div>
<div class="sunk" style="left:653.5px;top:448.35px;width:36.5px;height:17px;background:#ECE9D8"></div>
<div class="sunk" style="left:691px;top:448.35px;width:58px;height:17px;background:#ECE9D8"></div>
<div class="sunk" style="left:128px;top:467.10px;width:39px;height:17px;background:#fff"></div>
<div class="ddb" style="left:152px;top:468.60px;width:15px;height:15px"></div><div class="arr" style="left:155.5px;top:474.10px"></div>
<div class="sunk" style="left:169px;top:467.10px;width:22px;height:17px;background:#fff"></div>
<div class="sunk" style="left:192px;top:467.10px;width:151px;height:17px;background:#ECE9D8"></div>
<div class="sunk" style="left:344px;top:467.10px;width:12px;height:17px;background:#fff"></div>
<div class="sunk" style="left:357px;top:467.10px;width:33px;height:17px;background:#fff"></div>
<div class="sunk" style="left:391px;top:467.10px;width:51px;height:17px;background:#fff"></div>
<div class="sunk" style="left:447.5px;top:467.10px;width:27.5px;height:17px;background:#fff"></div>
<div class="sunk" style="left:476.5px;top:467.10px;width:119.5px;height:17px;background:#ECE9D8"></div>
<div class="sunk" style="left:597.5px;top:467.10px;width:50.5px;height:17px;background:#fff"></div>
<div class="sunk" style="left:653.5px;top:467.10px;width:36.5px;height:17px;background:#ECE9D8"></div>
<div class="sunk" style="left:691px;top:467.10px;width:58px;height:17px;background:#ECE9D8"></div>
<div class="sunk" style="left:128px;top:485.85px;width:39px;height:17px;background:#fff"></div>
<div class="ddb" style="left:152px;top:487.35px;width:15px;height:15px"></div><div class="arr" style="left:155.5px;top:492.85px"></div>
<div class="sunk" style="left:169px;top:485.85px;width:22px;height:17px;background:#fff"></div>
<div class="sunk" style="left:192px;top:485.85px;width:151px;height:17px;background:#ECE9D8"></div>
<div class="sunk" style="left:344px;top:485.85px;width:12px;height:17px;background:#fff"></div>
<div class="sunk" style="left:357px;top:485.85px;width:33px;height:17px;background:#fff"></div>
<div class="sunk" style="left:391px;top:485.85px;width:51px;height:17px;background:#fff"></div>
<div class="sunk" style="left:447.5px;top:485.85px;width:27.5px;height:17px;background:#fff"></div>
<div class="sunk" style="left:476.5px;top:485.85px;width:119.5px;height:17px;background:#ECE9D8"></div>
<div class="sunk" style="left:597.5px;top:485.85px;width:50.5px;height:17px;background:#fff"></div>
<div class="sunk" style="left:653.5px;top:485.85px;width:36.5px;height:17px;background:#ECE9D8"></div>
<div class="sunk" style="left:691px;top:485.85px;width:58px;height:17px;background:#ECE9D8"></div>
<div class="t" style="left:176px;top:135px;font-size:10.5px;color:#333">1</div>
<div class="t" style="left:195px;top:135px;font-size:10px;color:#000;letter-spacing:-0.1px">Pressure Hose</div>
<div class="ab" style="left:329px;top:131px;width:14px;height:17px;background:#D0CCC0;border-right:2px solid #000;border-bottom:2px solid #000"></div><div class="ab" style="left:334px;top:140px;width:4px;height:3px;background:#3060E0"></div>
<div class="t" style="left:347px;top:135px;font-size:10.5px;color:#222">B</div>
<div class="t" style="left:357px;width:31px;text-align:right;top:135px;font-size:10.5px;color:#222">1.0</div>
<div class="t" style="left:392px;width:48px;text-align:right;top:135px;font-size:10.5px;color:#222">75.00</div>
<div class="t" style="left:459px;top:135px;font-size:10.5px;color:#333">1</div>
<div class="t" style="left:480px;top:135px;font-size:10px;color:#000;letter-spacing:-0.1px">Pressure Hose</div>
<div class="ab" style="left:582px;top:131px;width:14px;height:17px;background:#D0CCC0;border-right:2px solid #000;border-bottom:2px solid #000"></div><div class="ab" style="left:587px;top:140px;width:4px;height:3px;background:#3060E0"></div>
<div class="t" style="left:598px;width:48px;text-align:right;top:135px;font-size:10.5px;color:#222">58.86</div>
<div class="t" style="left:654px;width:34px;text-align:right;top:135px;font-size:10.5px;color:#222">4.12</div>
<div class="t" style="left:692px;width:56px;text-align:right;top:135px;font-size:10.5px;color:#222">137.98</div>
<div class="ab" style="left:128px;top:508.5px;width:620px;height:28px;background:#4682B4"></div>
<div class="ab" style="left:748px;top:508.5px;width:2px;height:28px;background:#E8F0F8"></div>
<div class="t" style="left:312px;top:518px;font-size:11px;font-weight:bold;color:#fff">Totals:</div>
<div class="t" style="left:446px;top:518px;font-size:11px;color:#DCE4F2;transform:scaleX(0.87);transform-origin:0 0">Supplies:</div>
<div class="t" style="left:551px;top:518px;font-size:11px;font-weight:bold;color:#fff">Totals:</div>
<div class="ab" style="left:357.5px;top:514px;width:32.5px;height:18.5px;background:linear-gradient(90deg,#ECE9DC,#F2F0E6);border-top:1.5px solid #8A846E;border-left:1.5px solid #8A846E;border-right:1px solid #FFF;border-bottom:1px solid #FFF;box-shadow:0 0 0 1px #3570B4"></div>
<div class="t" style="left:357.5px;width:29.5px;text-align:right;top:518px;font-size:10.5px;color:#222">1.0</div>
<div class="ab" style="left:392.5px;top:514px;width:50.0px;height:18.5px;background:linear-gradient(90deg,#ECE9DC,#F2F0E6);border-top:1.5px solid #8A846E;border-left:1.5px solid #8A846E;border-right:1px solid #FFF;border-bottom:1px solid #FFF;box-shadow:0 0 0 1px #3570B4"></div>
<div class="t" style="left:392.5px;width:47.0px;text-align:right;top:518px;font-size:10.5px;color:#222">75.00</div>
<div class="ab" style="left:490.5px;top:514px;width:52.5px;height:18.5px;background:linear-gradient(90deg,#ECE9DC,#F2F0E6);border-top:1.5px solid #8A846E;border-left:1.5px solid #8A846E;border-right:1px solid #FFF;border-bottom:1px solid #FFF;box-shadow:0 0 0 1px #3570B4"></div>
<div class="ab" style="left:596.5px;top:514px;width:52.5px;height:18.5px;background:linear-gradient(90deg,#ECE9DC,#F2F0E6);border-top:1.5px solid #8A846E;border-left:1.5px solid #8A846E;border-right:1px solid #FFF;border-bottom:1px solid #FFF;box-shadow:0 0 0 1px #3570B4"></div>
<div class="t" style="left:596.5px;width:49.5px;text-align:right;top:518px;font-size:10.5px;color:#222">58.86</div>
<div class="ab" style="left:653.5px;top:514px;width:38.0px;height:18.5px;background:linear-gradient(90deg,#ECE9DC,#F2F0E6);border-top:1.5px solid #8A846E;border-left:1.5px solid #8A846E;border-right:1px solid #FFF;border-bottom:1px solid #FFF;box-shadow:0 0 0 1px #3570B4"></div>
<div class="t" style="left:653.5px;width:35.0px;text-align:right;top:518px;font-size:10.5px;color:#222">4.12</div>
<div class="ab" style="left:692.5px;top:514px;width:53.0px;height:18.5px;background:linear-gradient(90deg,#ECE9DC,#F2F0E6);border-top:1.5px solid #8A846E;border-left:1.5px solid #8A846E;border-right:1px solid #FFF;border-bottom:1px solid #FFF;box-shadow:0 0 0 1px #3570B4"></div>
<div class="t" style="left:692.5px;width:50.0px;text-align:right;top:518px;font-size:10.5px;color:#222">137.98</div>
<div class="ab" style="left:750px;top:44px;width:8.5px;height:494px;background:linear-gradient(90deg,#0A50D0 0,#0A50D0 1.5px,#3A70D8 4px,#2C62D4 8.5px)"></div>
<div class="ab" style="left:758.5px;top:44px;width:194px;height:494px;background:#ECE9D8"></div>
<div class="ab" style="left:760px;top:44px;width:191px;height:492px;background:#D8D8D8;border-left:2px solid #EEE"></div>
<div class="ab" style="left:952.5px;top:44px;width:7.5px;height:644px;background:linear-gradient(90deg,#0850C8 0,#0850C8 1.5px,#3A6ACA 3.5px,#3A6ACA 100%)"></div>
<div class="ab" style="left:760px;top:44px;width:191px;height:23px;background:#ECE9D8;border-top:1px solid #6f6b60;border-bottom:1px solid #6f6b60"></div>
<div class="t" style="left:769px;top:52px;font-size:8.5px;color:#222">Estimates</div>
<div class="ab" style="left:815px;top:47px;width:1.5px;height:18px;background:#6f6b60"></div>
<div class="t" style="left:823px;top:52px;font-size:8.5px;color:#222">Work in Progress</div>
<div class="ab" style="left:896px;top:46px;width:53px;height:20px;background:#ECE9D8;border-left:1px solid #fff"></div>
<div class="t" style="left:906px;top:51px;font-size:8.5px;color:#222">Invoices</div>
<div class="ab" style="left:947.5px;top:46px;width:1.5px;height:20px;background:#6f6b60"></div>
<div class="t" style="left:769px;top:70px;font-size:8.5px;color:#333">Service Writer:</div>
<div class="t" style="left:881px;top:70px;font-size:8.5px;color:#333">Num to View:</div>
<div class="sunk" style="left:767.5px;top:83px;width:113px;height:18px;background:#fff"></div>
<div class="t" style="left:771px;top:88px;font-size:10px;color:#222">All</div>
<div class="ddb" style="left:863px;top:85px;width:17px;height:16px"></div><div class="arr" style="left:867.5px;top:91px"></div>
<div class="sunk" style="left:881.5px;top:83px;width:56px;height:17px;background:#fff"></div>
<div class="t" style="left:884px;top:88px;font-size:10px;color:#222">10</div>
<div class="ddb" style="left:921px;top:84px;width:16px;height:16px"></div><div class="arr" style="left:925px;top:90px"></div>
<div class="ab" style="left:762px;top:103px;width:189px;height:16px;background:#D0D0D0"></div>
<div class="t" style="left:769.5px;top:107px;font-size:8.5px;color:#333">R.O:</div>
<div class="t" style="left:814.5px;top:107px;font-size:8.5px;color:#333">Date:</div>
<div class="t" style="left:852px;top:107px;font-size:8.5px;color:#333">Name:</div>
<div class="t" style="left:912px;top:107px;font-size:8.5px;color:#333">Status:</div>
<div class="sunk" style="left:767.5px;top:121px;width:171.5px;height:407px;background:#fff"></div>
<div class="t" style="left:771px;top:122.00px;font-family:'Liberation Mono',monospace;font-weight:bold;font-size:7.8px;line-height:8px;color:#222">6586&nbsp;&nbsp;&nbsp;&nbsp;01/27/09&nbsp;Marvin&nbsp;Smith&nbsp;Open</div>
<div class="t" style="left:771px;top:130.47px;font-family:'Liberation Mono',monospace;font-weight:bold;font-size:7.8px;line-height:8px;color:#222">6584&nbsp;&nbsp;&nbsp;&nbsp;01/27/09&nbsp;Jenna&nbsp;Jones&nbsp;&nbsp;Open</div>
<div class="t" style="left:771px;top:138.94px;font-family:'Liberation Mono',monospace;font-weight:bold;font-size:7.8px;line-height:8px;color:#222">6583&nbsp;&nbsp;&nbsp;&nbsp;01/27/09&nbsp;Don&nbsp;Holthe&nbsp;&nbsp;&nbsp;Open</div>
<div class="ab" style="left:769px;top:147.11px;width:169px;height:8.5px;background:#316AC5"></div>
<div class="t" style="left:771px;top:147.41px;font-family:'Liberation Mono',monospace;font-weight:bold;font-size:7.8px;line-height:8px;color:#fff">6582&nbsp;&nbsp;&nbsp;&nbsp;01/27/09&nbsp;Bill&nbsp;Bailey&nbsp;&nbsp;Open</div>
<div class="t" style="left:771px;top:155.88px;font-family:'Liberation Mono',monospace;font-weight:bold;font-size:7.8px;line-height:8px;color:#222">6581&nbsp;&nbsp;&nbsp;&nbsp;01/27/09&nbsp;Lenard&nbsp;Rehfe&nbsp;Paid</div>
<div class="t" style="left:771px;top:164.35px;font-family:'Liberation Mono',monospace;font-weight:bold;font-size:7.8px;line-height:8px;color:#222">6580&nbsp;&nbsp;&nbsp;&nbsp;01/26/09&nbsp;Bruce&nbsp;Jenner&nbsp;Open</div>
<div class="t" style="left:771px;top:172.82px;font-family:'Liberation Mono',monospace;font-weight:bold;font-size:7.8px;line-height:8px;color:#222">6579&nbsp;&nbsp;&nbsp;&nbsp;01/26/09&nbsp;Tom&nbsp;Grokoff&nbsp;&nbsp;Paid</div>
<div class="t" style="left:771px;top:181.29px;font-family:'Liberation Mono',monospace;font-weight:bold;font-size:7.8px;line-height:8px;color:#222">6575&nbsp;&nbsp;&nbsp;&nbsp;01/27/09&nbsp;Dan&nbsp;Smith&nbsp;&nbsp;&nbsp;&nbsp;Paid</div>
<div class="t" style="left:771px;top:189.76px;font-family:'Liberation Mono',monospace;font-weight:bold;font-size:7.8px;line-height:8px;color:#222">6572&nbsp;&nbsp;&nbsp;&nbsp;01/27/09&nbsp;Don&nbsp;Jean&nbsp;&nbsp;&nbsp;&nbsp;&nbsp;Paid</div>
<div class="t" style="left:771px;top:198.23px;font-family:'Liberation Mono',monospace;font-weight:bold;font-size:7.8px;line-height:8px;color:#222">6563&nbsp;&nbsp;&nbsp;&nbsp;01/26/09&nbsp;Paul&nbsp;Martin&nbsp;&nbsp;Open</div>
<div class="ab" style="left:2px;top:537px;width:950.5px;height:151px;background:#DEDEDE"></div>
<div class="ab" style="left:2px;top:537px;width:950.5px;height:2px;background:#fff"></div>
<div class="ab" style="left:2px;top:539px;width:950.5px;height:1.5px;background:#8A8676"></div>
<div class="sunk" style="left:10.8px;top:548px;width:120px;height:16.5px;background:#fff"></div>
<div class="t" style="left:13.8px;top:553.2px;font-size:8.5px;color:#1a1a1a;-webkit-text-stroke:0.2px #1a1a1a">Tuesday, January 27, 2009</div>
<div class="sunk" style="left:10.8px;top:570px;width:120px;height:71px;background:#fff;overflow:hidden"></div>
<div class="t" style="left:13.8px;top:574.70px;font-size:8.5px;color:#1a1a1a;-webkit-text-stroke:0.3px #1a1a1a;width:115px;height:11px;overflow:hidden">Marvin Smith LOF</div>
<div class="t" style="left:13.8px;top:585.95px;font-size:8.5px;color:#1a1a1a;-webkit-text-stroke:0.3px #1a1a1a;width:115px;height:11px;overflow:hidden">Jenna Jones Safety Check</div>
<div class="t" style="left:13.8px;top:597.20px;font-size:8.5px;color:#1a1a1a;-webkit-text-stroke:0.3px #1a1a1a;width:115px;height:11px;overflow:hidden">Don Holthe Check Brakes</div>
<div class="t" style="left:13.8px;top:608.45px;font-size:8.5px;color:#1a1a1a;-webkit-text-stroke:0.3px #1a1a1a;width:115px;height:11px;overflow:hidden">Bill Bailey Coolant Leak</div>
<div class="t" style="left:13.8px;top:619.70px;font-size:8.5px;color:#1a1a1a;-webkit-text-stroke:0.3px #1a1a1a;width:115px;height:11px;overflow:hidden">Click to add an appointment.</div>
<div class="ab" style="left:10.8px;top:653.5px;width:120px;height:8.5px;background:#EEEADA;border-top:1px solid #C8C4B0"></div>
<div class="ab" style="left:11.80px;top:654.8px;width:3.6px;height:6.2px;background:#0848D8;border-radius:1px"></div>
<div class="ab" style="left:17.45px;top:654.8px;width:3.6px;height:6.2px;background:#0848D8;border-radius:1px"></div>
<div class="ab" style="left:23.10px;top:654.8px;width:3.6px;height:6.2px;background:#0848D8;border-radius:1px"></div>
<div class="ab" style="left:28.75px;top:654.8px;width:3.6px;height:6.2px;background:#0848D8;border-radius:1px"></div>
<div class="ab" style="left:34.40px;top:654.8px;width:3.6px;height:6.2px;background:#0848D8;border-radius:1px"></div>
<div class="ab" style="left:40.05px;top:654.8px;width:3.6px;height:6.2px;background:#0848D8;border-radius:1px"></div>
<div class="ab" style="left:45.70px;top:654.8px;width:3.6px;height:6.2px;background:#0848D8;border-radius:1px"></div>
<div class="ab" style="left:51.35px;top:654.8px;width:3.6px;height:6.2px;background:#0848D8;border-radius:1px"></div>
<div class="ab" style="left:57.00px;top:654.8px;width:3.6px;height:6.2px;background:#0848D8;border-radius:1px"></div>
<div class="ab" style="left:62.65px;top:654.8px;width:3.6px;height:6.2px;background:#0848D8;border-radius:1px"></div>
<div class="ab" style="left:68.30px;top:654.8px;width:3.6px;height:6.2px;background:#0848D8;border-radius:1px"></div>
<div class="sunk" style="left:145.8px;top:548px;width:120px;height:16.5px;background:#fff"></div>
<div class="t" style="left:148.8px;top:553.2px;font-size:8.5px;color:#1a1a1a;-webkit-text-stroke:0.2px #1a1a1a">Wednesday, January 28, 2009</div>
<div class="sunk" style="left:145.8px;top:570px;width:120px;height:71px;background:#fff;overflow:hidden"></div>
<div class="t" style="left:148.8px;top:574.70px;font-size:8.5px;color:#1a1a1a;-webkit-text-stroke:0.3px #1a1a1a;width:104px;height:11px;overflow:hidden">Tim Tiley Heater Core</div>
<div class="t" style="left:148.8px;top:585.95px;font-size:8.5px;color:#1a1a1a;-webkit-text-stroke:0.3px #1a1a1a;width:104px;height:11px;overflow:hidden">Quincey Jones Stalling at S</div>
<div class="t" style="left:148.8px;top:597.20px;font-size:8.5px;color:#1a1a1a;-webkit-text-stroke:0.3px #1a1a1a;width:104px;height:11px;overflow:hidden">Paula Preston 30K Service</div>
<div class="t" style="left:148.8px;top:608.45px;font-size:8.5px;color:#1a1a1a;-webkit-text-stroke:0.3px #1a1a1a;width:104px;height:11px;overflow:hidden">Wayne Rogers Brake Shake</div>
<div class="t" style="left:148.8px;top:619.70px;font-size:8.5px;color:#1a1a1a;-webkit-text-stroke:0.3px #1a1a1a;width:104px;height:11px;overflow:hidden">Mark Wood Driver Window</div>
<div class="t" style="left:148.8px;top:630.95px;font-size:8.5px;color:#1a1a1a;-webkit-text-stroke:0.3px #1a1a1a;width:104px;height:11px;overflow:hidden">Karen Hiatt Check Noise W</div>
<div class="ab" style="left:251.3px;top:572px;width:14px;height:68px;background:#F4F4F0"></div>
<div class="ab" style="left:251.3px;top:574px;width:13.5px;height:12px;background:#C0D4F8;border-radius:2px"></div>
<div class="ab" style="left:251.3px;top:588.5px;width:13.5px;height:25.5px;background:#C8DAFA;border-radius:2px"></div>
<div class="ab" style="left:251.3px;top:625px;width:13.5px;height:14px;background:#C0D4F8;border-radius:2px"></div>
<svg class="ab" style="left:251.3px;top:574px" width="14" height="66"><path d="M3.5 8 L7 4.5 L10.5 8" stroke="#28408A" stroke-width="1.6" fill="none"/><path d="M3.5 56 L7 59.5 L10.5 56" stroke="#28408A" stroke-width="1.6" fill="none"/><path d="M4 24h6M4 27h6M4 30h6" stroke="#E8F0FF" stroke-width="1"/></svg>
<div class="ab" style="left:145.8px;top:653.5px;width:120px;height:8.5px;background:#EEEADA;border-top:1px solid #C8C4B0"></div>
<div class="ab" style="left:146.80px;top:654.8px;width:3.6px;height:6.2px;background:#0848D8;border-radius:1px"></div>
<div class="ab" style="left:152.45px;top:654.8px;width:3.6px;height:6.2px;background:#0848D8;border-radius:1px"></div>
<div class="ab" style="left:158.10px;top:654.8px;width:3.6px;height:6.2px;background:#0848D8;border-radius:1px"></div>
<div class="ab" style="left:163.75px;top:654.8px;width:3.6px;height:6.2px;background:#0848D8;border-radius:1px"></div>
<div class="ab" style="left:169.40px;top:654.8px;width:3.6px;height:6.2px;background:#0848D8;border-radius:1px"></div>
<div class="ab" style="left:175.05px;top:654.8px;width:3.6px;height:6.2px;background:#0848D8;border-radius:1px"></div>
<div class="ab" style="left:180.70px;top:654.8px;width:3.6px;height:6.2px;background:#0848D8;border-radius:1px"></div>
<div class="ab" style="left:186.35px;top:654.8px;width:3.6px;height:6.2px;background:#0848D8;border-radius:1px"></div>
<div class="ab" style="left:192.00px;top:654.8px;width:3.6px;height:6.2px;background:#0848D8;border-radius:1px"></div>
<div class="ab" style="left:197.65px;top:654.8px;width:3.6px;height:6.2px;background:#0848D8;border-radius:1px"></div>
<div class="ab" style="left:203.30px;top:654.8px;width:3.6px;height:6.2px;background:#0848D8;border-radius:1px"></div>
<div class="ab" style="left:208.95px;top:654.8px;width:3.6px;height:6.2px;background:#0848D8;border-radius:1px"></div>
<div class="ab" style="left:214.60px;top:654.8px;width:3.6px;height:6.2px;background:#0848D8;border-radius:1px"></div>
<div class="ab" style="left:220.25px;top:654.8px;width:3.6px;height:6.2px;background:#0848D8;border-radius:1px"></div>
<div class="ab" style="left:225.90px;top:654.8px;width:3.6px;height:6.2px;background:#0848D8;border-radius:1px"></div>
<div class="ab" style="left:231.55px;top:654.8px;width:3.6px;height:6.2px;background:#0848D8;border-radius:1px"></div>
<div class="ab" style="left:237.20px;top:654.8px;width:3.6px;height:6.2px;background:#0848D8;border-radius:1px"></div>
<div class="ab" style="left:242.85px;top:654.8px;width:3.6px;height:6.2px;background:#0848D8;border-radius:1px"></div>
<div class="ab" style="left:248.50px;top:654.8px;width:3.6px;height:6.2px;background:#0848D8;border-radius:1px"></div>
<div class="sunk" style="left:280.8px;top:548px;width:120px;height:16.5px;background:#fff"></div>
<div class="t" style="left:283.8px;top:553.2px;font-size:8.5px;color:#1a1a1a;-webkit-text-stroke:0.2px #1a1a1a">Thursday, January 29, 2009</div>
<div class="sunk" style="left:280.8px;top:570px;width:120px;height:71px;background:#fff;overflow:hidden"></div>
<div class="t" style="left:283.8px;top:574.70px;font-size:8.5px;color:#1a1a1a;-webkit-text-stroke:0.3px #1a1a1a;width:115px;height:11px;overflow:hidden">George Bush No Backup Lights</div>
<div class="t" style="left:283.8px;top:585.95px;font-size:8.5px;color:#1a1a1a;-webkit-text-stroke:0.3px #1a1a1a;width:115px;height:11px;overflow:hidden">Yohan Struct Radio Insp</div>
<div class="t" style="left:283.8px;top:597.20px;font-size:8.5px;color:#1a1a1a;-webkit-text-stroke:0.3px #1a1a1a;width:115px;height:11px;overflow:hidden">Anderson Electric #22 Tune & S</div>
<div class="t" style="left:283.8px;top:608.45px;font-size:8.5px;color:#1a1a1a;-webkit-text-stroke:0.3px #1a1a1a;width:115px;height:11px;overflow:hidden">Dave Weatherspoon Check Air</div>
<div class="t" style="left:283.8px;top:619.70px;font-size:8.5px;color:#1a1a1a;-webkit-text-stroke:0.3px #1a1a1a;width:115px;height:11px;overflow:hidden">Click to add an appointment.</div>
<div class="ab" style="left:280.8px;top:653.5px;width:120px;height:8.5px;background:#EEEADA;border-top:1px solid #C8C4B0"></div>
<div class="ab" style="left:281.80px;top:654.8px;width:3.6px;height:6.2px;background:#0848D8;border-radius:1px"></div>
<div class="ab" style="left:287.45px;top:654.8px;width:3.6px;height:6.2px;background:#0848D8;border-radius:1px"></div>
<div class="ab" style="left:293.10px;top:654.8px;width:3.6px;height:6.2px;background:#0848D8;border-radius:1px"></div>
<div class="ab" style="left:298.75px;top:654.8px;width:3.6px;height:6.2px;background:#0848D8;border-radius:1px"></div>
<div class="ab" style="left:304.40px;top:654.8px;width:3.6px;height:6.2px;background:#0848D8;border-radius:1px"></div>
<div class="ab" style="left:310.05px;top:654.8px;width:3.6px;height:6.2px;background:#0848D8;border-radius:1px"></div>
<div class="ab" style="left:315.70px;top:654.8px;width:3.6px;height:6.2px;background:#0848D8;border-radius:1px"></div>
<div class="ab" style="left:321.35px;top:654.8px;width:3.6px;height:6.2px;background:#0848D8;border-radius:1px"></div>
<div class="ab" style="left:327.00px;top:654.8px;width:3.6px;height:6.2px;background:#0848D8;border-radius:1px"></div>
<div class="sunk" style="left:415.8px;top:548px;width:120px;height:16.5px;background:#fff"></div>
<div class="t" style="left:418.8px;top:553.2px;font-size:8.5px;color:#1a1a1a;-webkit-text-stroke:0.2px #1a1a1a">Friday, January 30, 2009</div>
<div class="sunk" style="left:415.8px;top:570px;width:120px;height:71px;background:#fff;overflow:hidden"></div>
<div class="t" style="left:418.8px;top:574.70px;font-size:8.5px;color:#1a1a1a;-webkit-text-stroke:0.3px #1a1a1a;width:115px;height:11px;overflow:hidden">Willy Nelson Weird Smell</div>
<div class="t" style="left:418.8px;top:585.95px;font-size:8.5px;color:#1a1a1a;-webkit-text-stroke:0.3px #1a1a1a;width:115px;height:11px;overflow:hidden">Tom Preston Trans Slipping</div>
<div class="t" style="left:418.8px;top:597.20px;font-size:8.5px;color:#1a1a1a;-webkit-text-stroke:0.3px #1a1a1a;width:115px;height:11px;overflow:hidden">Click to add an appointment.</div>
<div class="ab" style="left:415.8px;top:653.5px;width:120px;height:8.5px;background:#EEEADA;border-top:1px solid #C8C4B0"></div>
<div class="ab" style="left:416.80px;top:654.8px;width:3.6px;height:6.2px;background:#0848D8;border-radius:1px"></div>
<div class="ab" style="left:422.45px;top:654.8px;width:3.6px;height:6.2px;background:#0848D8;border-radius:1px"></div>
<div class="ab" style="left:428.10px;top:654.8px;width:3.6px;height:6.2px;background:#0848D8;border-radius:1px"></div>
<div class="ab" style="left:433.75px;top:654.8px;width:3.6px;height:6.2px;background:#0848D8;border-radius:1px"></div>
<div class="ab" style="left:439.40px;top:654.8px;width:3.6px;height:6.2px;background:#0848D8;border-radius:1px"></div>
<div class="sunk" style="left:550.8px;top:548px;width:120px;height:16.5px;background:#fff"></div>
<div class="t" style="left:553.8px;top:553.2px;font-size:8.5px;color:#1a1a1a;-webkit-text-stroke:0.2px #1a1a1a">Saturday, January 31, 2009</div>
<div class="sunk" style="left:550.8px;top:570px;width:120px;height:71px;background:#fff;overflow:hidden"></div>
<div class="t" style="left:553.8px;top:574.70px;font-size:8.5px;color:#1a1a1a;-webkit-text-stroke:0.3px #1a1a1a;width:115px;height:11px;overflow:hidden">Lisa Hyatt LOF Check Brakes</div>
<div class="t" style="left:553.8px;top:585.95px;font-size:8.5px;color:#1a1a1a;-webkit-text-stroke:0.3px #1a1a1a;width:115px;height:11px;overflow:hidden">Bruce Holland LOF</div>
<div class="t" style="left:553.8px;top:597.20px;font-size:8.5px;color:#1a1a1a;-webkit-text-stroke:0.3px #1a1a1a;width:115px;height:11px;overflow:hidden">Patsy Kline LOF Rotate Tires</div>
<div class="t" style="left:553.8px;top:608.45px;font-size:8.5px;color:#1a1a1a;-webkit-text-stroke:0.3px #1a1a1a;width:115px;height:11px;overflow:hidden">Mark Williams Diff Noise</div>
<div class="t" style="left:553.8px;top:619.70px;font-size:8.5px;color:#1a1a1a;-webkit-text-stroke:0.3px #1a1a1a;width:115px;height:11px;overflow:hidden">Click to add an appointment.</div>
<div class="ab" style="left:550.8px;top:653.5px;width:120px;height:8.5px;background:#EEEADA;border-top:1px solid #C8C4B0"></div>
<div class="ab" style="left:551.80px;top:654.8px;width:3.6px;height:6.2px;background:#0848D8;border-radius:1px"></div>
<div class="ab" style="left:557.45px;top:654.8px;width:3.6px;height:6.2px;background:#0848D8;border-radius:1px"></div>
<div class="ab" style="left:563.10px;top:654.8px;width:3.6px;height:6.2px;background:#0848D8;border-radius:1px"></div>
<div class="ab" style="left:568.75px;top:654.8px;width:3.6px;height:6.2px;background:#0848D8;border-radius:1px"></div>
<div class="ab" style="left:574.40px;top:654.8px;width:3.6px;height:6.2px;background:#0848D8;border-radius:1px"></div>
<div class="ab" style="left:580.05px;top:654.8px;width:3.6px;height:6.2px;background:#0848D8;border-radius:1px"></div>
<div class="ab" style="left:585.70px;top:654.8px;width:3.6px;height:6.2px;background:#0848D8;border-radius:1px"></div>
<div class="ab" style="left:591.35px;top:654.8px;width:3.6px;height:6.2px;background:#0848D8;border-radius:1px"></div>
<div class="ab" style="left:597.00px;top:654.8px;width:3.6px;height:6.2px;background:#0848D8;border-radius:1px"></div>
<div class="sunk" style="left:685.8px;top:548px;width:120px;height:16.5px;background:#fff"></div>
<div class="t" style="left:688.8px;top:553.2px;font-size:8.5px;color:#1a1a1a;-webkit-text-stroke:0.2px #1a1a1a">Sunday, February 01, 2009</div>
<div class="sunk" style="left:685.8px;top:570px;width:120px;height:71px;background:#fff;overflow:hidden"></div>
<div class="t" style="left:688.8px;top:574.70px;font-size:8.5px;color:#1a1a1a;-webkit-text-stroke:0.3px #1a1a1a;width:115px;height:11px;overflow:hidden">CLOSED</div>
<div class="t" style="left:688.8px;top:585.95px;font-size:8.5px;color:#1a1a1a;-webkit-text-stroke:0.3px #1a1a1a;width:115px;height:11px;overflow:hidden">Click to add an appointment.</div>
<div class="ab" style="left:685.8px;top:653.5px;width:120px;height:8.5px;background:#EEEADA;border-top:1px solid #C8C4B0"></div>
<div class="ab" style="left:686.80px;top:654.8px;width:3.6px;height:6.2px;background:#0848D8;border-radius:1px"></div>
<div class="ab" style="left:692.45px;top:654.8px;width:3.6px;height:6.2px;background:#0848D8;border-radius:1px"></div>
<div class="ab" style="left:698.10px;top:654.8px;width:3.6px;height:6.2px;background:#0848D8;border-radius:1px"></div>
<div class="ab" style="left:703.75px;top:654.8px;width:3.6px;height:6.2px;background:#0848D8;border-radius:1px"></div>
<div class="ab" style="left:709.40px;top:654.8px;width:3.6px;height:6.2px;background:#0848D8;border-radius:1px"></div>
<div class="ab" style="left:715.05px;top:654.8px;width:3.6px;height:6.2px;background:#0848D8;border-radius:1px"></div>
<div class="ab" style="left:720.70px;top:654.8px;width:3.6px;height:6.2px;background:#0848D8;border-radius:1px"></div>
<div class="ab" style="left:726.35px;top:654.8px;width:3.6px;height:6.2px;background:#0848D8;border-radius:1px"></div>
<div class="ab" style="left:732.00px;top:654.8px;width:3.6px;height:6.2px;background:#0848D8;border-radius:1px"></div>
<div class="ab" style="left:737.65px;top:654.8px;width:3.6px;height:6.2px;background:#0848D8;border-radius:1px"></div>
<div class="ab" style="left:743.30px;top:654.8px;width:3.6px;height:6.2px;background:#0848D8;border-radius:1px"></div>
<div class="ab" style="left:748.95px;top:654.8px;width:3.6px;height:6.2px;background:#0848D8;border-radius:1px"></div>
<div class="ab" style="left:754.60px;top:654.8px;width:3.6px;height:6.2px;background:#0848D8;border-radius:1px"></div>
<div class="ab" style="left:760.25px;top:654.8px;width:3.6px;height:6.2px;background:#0848D8;border-radius:1px"></div>
<div class="ab" style="left:765.90px;top:654.8px;width:3.6px;height:6.2px;background:#0848D8;border-radius:1px"></div>
<div class="ab" style="left:771.55px;top:654.8px;width:3.6px;height:6.2px;background:#0848D8;border-radius:1px"></div>
<div class="ab" style="left:777.20px;top:654.8px;width:3.6px;height:6.2px;background:#0848D8;border-radius:1px"></div>
<div class="ab" style="left:782.85px;top:654.8px;width:3.6px;height:6.2px;background:#0848D8;border-radius:1px"></div>
<div class="ab" style="left:788.50px;top:654.8px;width:3.6px;height:6.2px;background:#0848D8;border-radius:1px"></div>
<div class="ab" style="left:794.15px;top:654.8px;width:3.6px;height:6.2px;background:#0848D8;border-radius:1px"></div>
<div class="ab" style="left:799.80px;top:654.8px;width:3.6px;height:6.2px;background:#0848D8;border-radius:1px"></div>
<div class="sunk" style="left:820.8px;top:548px;width:120px;height:16.5px;background:#fff"></div>
<div class="t" style="left:823.8px;top:553.2px;font-size:8.5px;color:#1a1a1a;-webkit-text-stroke:0.2px #1a1a1a">Monday, February 02, 2009</div>
<div class="sunk" style="left:820.8px;top:570px;width:120px;height:71px;background:#fff;overflow:hidden"></div>
<div class="t" style="left:823.8px;top:574.70px;font-size:8.5px;color:#1a1a1a;-webkit-text-stroke:0.3px #1a1a1a;width:115px;height:11px;overflow:hidden">Brandon Stiner Trip Check</div>
<div class="t" style="left:823.8px;top:585.95px;font-size:8.5px;color:#1a1a1a;-webkit-text-stroke:0.3px #1a1a1a;width:115px;height:11px;overflow:hidden">Click to add an appointment.</div>
<div class="ab" style="left:820.8px;top:653.5px;width:120px;height:8.5px;background:#EEEADA;border-top:1px solid #C8C4B0"></div>
<div class="ab" style="left:821.80px;top:654.8px;width:3.6px;height:6.2px;background:#0848D8;border-radius:1px"></div>
<div class="ab" style="left:827.45px;top:654.8px;width:3.6px;height:6.2px;background:#0848D8;border-radius:1px"></div>
<div class="ab" style="left:833.10px;top:654.8px;width:3.6px;height:6.2px;background:#0848D8;border-radius:1px"></div>
<div class="ab" style="left:2px;top:672px;width:949px;height:14.5px;background:#F4F2E8"></div>
<div class="ab" style="left:2px;top:672px;width:17px;height:14.5px;background:#F0EEE2;border-right:1px solid #C0BCB0"></div>
<div class="ab" style="left:7px;top:675px;width:0;height:0;border-top:4px solid transparent;border-bottom:4px solid transparent;border-right:4px solid #000"></div>
<div class="ab" style="left:82.5px;top:673px;width:61px;height:13px;background:#ECE9D8;border-right:1.5px solid #6f6b60;border-bottom:1px solid #8f8b80"></div>
<div class="ab" style="left:932.5px;top:672.5px;width:14px;height:13.5px;background:#F0EEE2;border-right:1.5px solid #444;border-bottom:1px solid #888"></div>
<div class="ab" style="left:938px;top:675px;width:0;height:0;border-top:4px solid transparent;border-bottom:4px solid transparent;border-left:4px solid #000"></div>
<div class="ab" style="left:0;top:688px;width:960px;height:32px;background:linear-gradient(#1A4CC0 0,#1A4CC0 1.5px,#3168CE 3.5px,#3168CE 100%)"></div>
</div></body></html>
